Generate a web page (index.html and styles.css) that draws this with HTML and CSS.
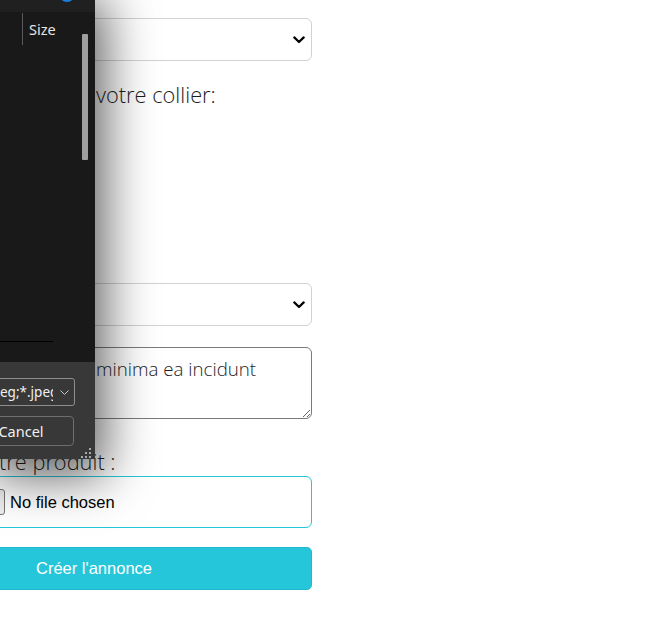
FILE: index.html
```html
<!DOCTYPE html>
<html lang="fr">
<head>
<meta charset="utf-8">
<title>Créer une annonce</title>
<link rel="stylesheet" href="styles.css">
</head>
<body>
<main class="page">
  <form class="form">
    <div class="select" role="combobox" aria-label="Catégorie">
      <svg class="select-chev" width="12" height="8" viewBox="0 0 12 8"><path d="M1.3 1.4 L6 6 L10.7 1.4" fill="none" stroke="#000" stroke-width="2.2" stroke-linecap="round" stroke-linejoin="round"/></svg>
    </div>
    <label class="label label-collier"><span class="cut cut-collier">Couleur de</span>votre collier:</label>
    <div class="select select-second" role="combobox" aria-label="Matière">
      <svg class="select-chev" width="12" height="8" viewBox="0 0 12 8"><path d="M1.3 1.4 L6 6 L10.7 1.4" fill="none" stroke="#000" stroke-width="2.2" stroke-linecap="round" stroke-linejoin="round"/></svg>
    </div>
    <textarea class="desc" aria-label="Description">minima ea incidunt</textarea>
    <label class="label label-produit"><span class="cut cut-produit">Image de vo</span>tre produit :</label>
    <input class="file" type="file" aria-label="Image">
    <button class="submit" type="button">Créer l'annonce</button>
  </form>
</main>

<div class="dialog" role="dialog" aria-label="Ouvrir">
  <div class="dlg-title"><span class="dlg-dot"></span></div>
  <div class="dlg-list">
    <div class="dlg-head"><span class="dlg-col">Size</span></div>
    <div class="dlg-rows"></div>
    <div class="dlg-hline"></div>
    <div class="dlg-thumb"></div>
  </div>
  <div class="dlg-foot">
    <div class="dlg-filter">
      <span class="dlg-filter-text">eg;*.jpeg</span>
      <svg class="dlg-filter-chev" width="9" height="5" viewBox="0 0 9 5"><path d="M0.5 0.5 L4.5 4.5 L8.5 0.5" fill="none" stroke="#c8c8c8" stroke-width="1"/></svg>
    </div>
    <button class="dlg-cancel" type="button">Cancel</button>
    <svg class="dlg-grip" width="12" height="12" viewBox="0 0 12 12">
      <rect x="9" y="1" width="2" height="2" fill="#a8a8a8"/>
      <rect x="5" y="5" width="2" height="2" fill="#a8a8a8"/>
      <rect x="9" y="5" width="2" height="2" fill="#a8a8a8"/>
      <rect x="1" y="9" width="2" height="2" fill="#a8a8a8"/>
      <rect x="5" y="9" width="2" height="2" fill="#a8a8a8"/>
      <rect x="9" y="9" width="2" height="2" fill="#a8a8a8"/>
    </svg>
  </div>
</div>
</body>
</html>
```

FILE: styles.css
```css
html, body {
  margin: 0;
  padding: 0;
}
body {
  width: 667px;
  height: 620px;
  overflow: hidden;
  position: relative;
  background: #ffffff;
  font-family: "Open Sans", "Noto Sans", sans-serif;
  color: #222222;
}

.page {
  padding-top: 18px;
}

.form {
  margin-left: -124px;
  width: 436px;
  display: flex;
  flex-direction: column;
}

.select {
  box-sizing: border-box;
  height: 43px;
  border: 1px solid #d2d2d2;
  border-radius: 6px;
  display: flex;
  align-items: center;
  justify-content: flex-end;
  padding-right: 6px;
  background: #fff;
}
.select-chev {
  display: block;
}
.select-second {
  margin-top: 174px;
}

.label {
  display: block;
  font-size: 21.8px;
  font-weight: 300;
  line-height: 28px;
  white-space: nowrap;
  color: #1e1e1e;
}
.label-collier {
  margin-top: 20px;
}
.label-produit {
  margin-top: 29px;
}
.cut {
  display: inline-block;
  overflow: hidden;
  vertical-align: top;
  white-space: nowrap;
}
.cut-collier {
  width: 220px;
}
.cut-produit {
  width: 123px;
}

.desc {
  box-sizing: border-box;
  margin: 21px 0 0 0;
  height: 72px;
  width: 100%;
  border: 1px solid #7a7a7a;
  border-radius: 6px;
  padding: 9px 12px 7px 12px;
  font-family: "Open Sans", sans-serif;
  font-weight: 300;
  font-size: 18.7px;
  line-height: 24px;
  color: #1e1e1e;
  text-indent: 207px;
  resize: vertical;
  background: #fff;
}

.file {
  box-sizing: border-box;
  width: 100%;
  margin: 0;
  border: 1px solid #26c6da;
  border-radius: 6px;
  padding: 12px 0 12px 22px;
  font-family: "Liberation Sans", Arial, sans-serif;
  font-size: 16.5px;
  color: #000;
  background: #fff;
}
.file::file-selector-button {
  height: 26px;
  font: inherit;
  margin-right: 5px;
  padding: 0 8px;
  border: 1px solid #767676;
  border-radius: 3px;
  background: #efefef;
  color: #000;
}

.submit {
  margin-top: 19px;
  height: 43px;
  width: 100%;
  border: 1px solid #22b8cb;
  border-radius: 5px;
  background: #26c6da;
  color: #ffffff;
  font-family: "Liberation Sans", Arial, sans-serif;
  font-size: 16.5px;
  padding: 0;
}

/* File dialog overlay */
.dialog {
  position: absolute;
  left: 0;
  top: 0;
  width: 95px;
  height: 459px;
  display: flex;
  flex-direction: column;
  background: #191919;
  box-shadow: 0 8px 50px 10px rgba(0, 0, 0, 0.62);
  overflow: hidden;
  font-family: "Noto Sans", "Open Sans", sans-serif;
  color: #e8e8e8;
  z-index: 2;
}
.dlg-title {
  height: 12px;
  flex: none;
  background: #202020;
  display: flex;
  padding-left: 59px;
}
.dlg-dot {
  width: 16px;
  height: 16px;
  margin-top: -14px;
  border-radius: 50%;
  background: #1a7ee0;
}
.dlg-list {
  flex: 1;
  position: relative;
  display: flex;
  flex-direction: column;
  background: #191919;
}
.dlg-head {
  margin: 1px 0 0 22px;
  height: 32px;
  border-left: 1px solid #5a5a5a;
  padding-left: 6px;
  display: flex;
  align-items: center;
}
.dlg-col {
  font-size: 14.5px;
  color: #e6e6e6;
}
.dlg-rows {
  flex: 1;
}
.dlg-hline {
  width: 53px;
  height: 1px;
  background: #000;
  margin-bottom: 20px;
}
.dlg-thumb {
  position: absolute;
  left: 82px;
  top: 22px;
  width: 6px;
  height: 126px;
  background: #9f9f9f;
  border-radius: 1px;
}
.dlg-foot {
  position: relative;
  flex: none;
  height: 97px;
  box-sizing: border-box;
  background: #383838;
  padding: 16px 21px 0 0;
  display: flex;
  flex-direction: column;
  align-items: flex-end;
}
.dlg-filter {
  box-sizing: border-box;
  width: 83px;
  height: 28px;
  margin-right: -1px;
  border: 1px solid #8d8d8d;
  border-radius: 3px;
  display: flex;
  align-items: center;
  padding-left: 7px;
  font-size: 13.5px;
  color: #f0f0f0;
}
.dlg-filter-text {
  width: 53px;
  flex: none;
  overflow: hidden;
  white-space: nowrap;
}
.dlg-filter-chev {
  margin-left: 7px;
  display: block;
}
.dlg-cancel {
  margin-top: 10px;
  width: 106px;
  height: 30px;
  box-sizing: border-box;
  border: 1px solid #6e6e6e;
  border-radius: 4px;
  background: #383838;
  color: #f0f0f0;
  font-family: "Noto Sans", "Open Sans", sans-serif;
  font-size: 14.5px;
  padding: 0;
}
.dlg-grip {
  position: absolute;
  right: 3px;
  bottom: 0;
  display: block;
}
```
